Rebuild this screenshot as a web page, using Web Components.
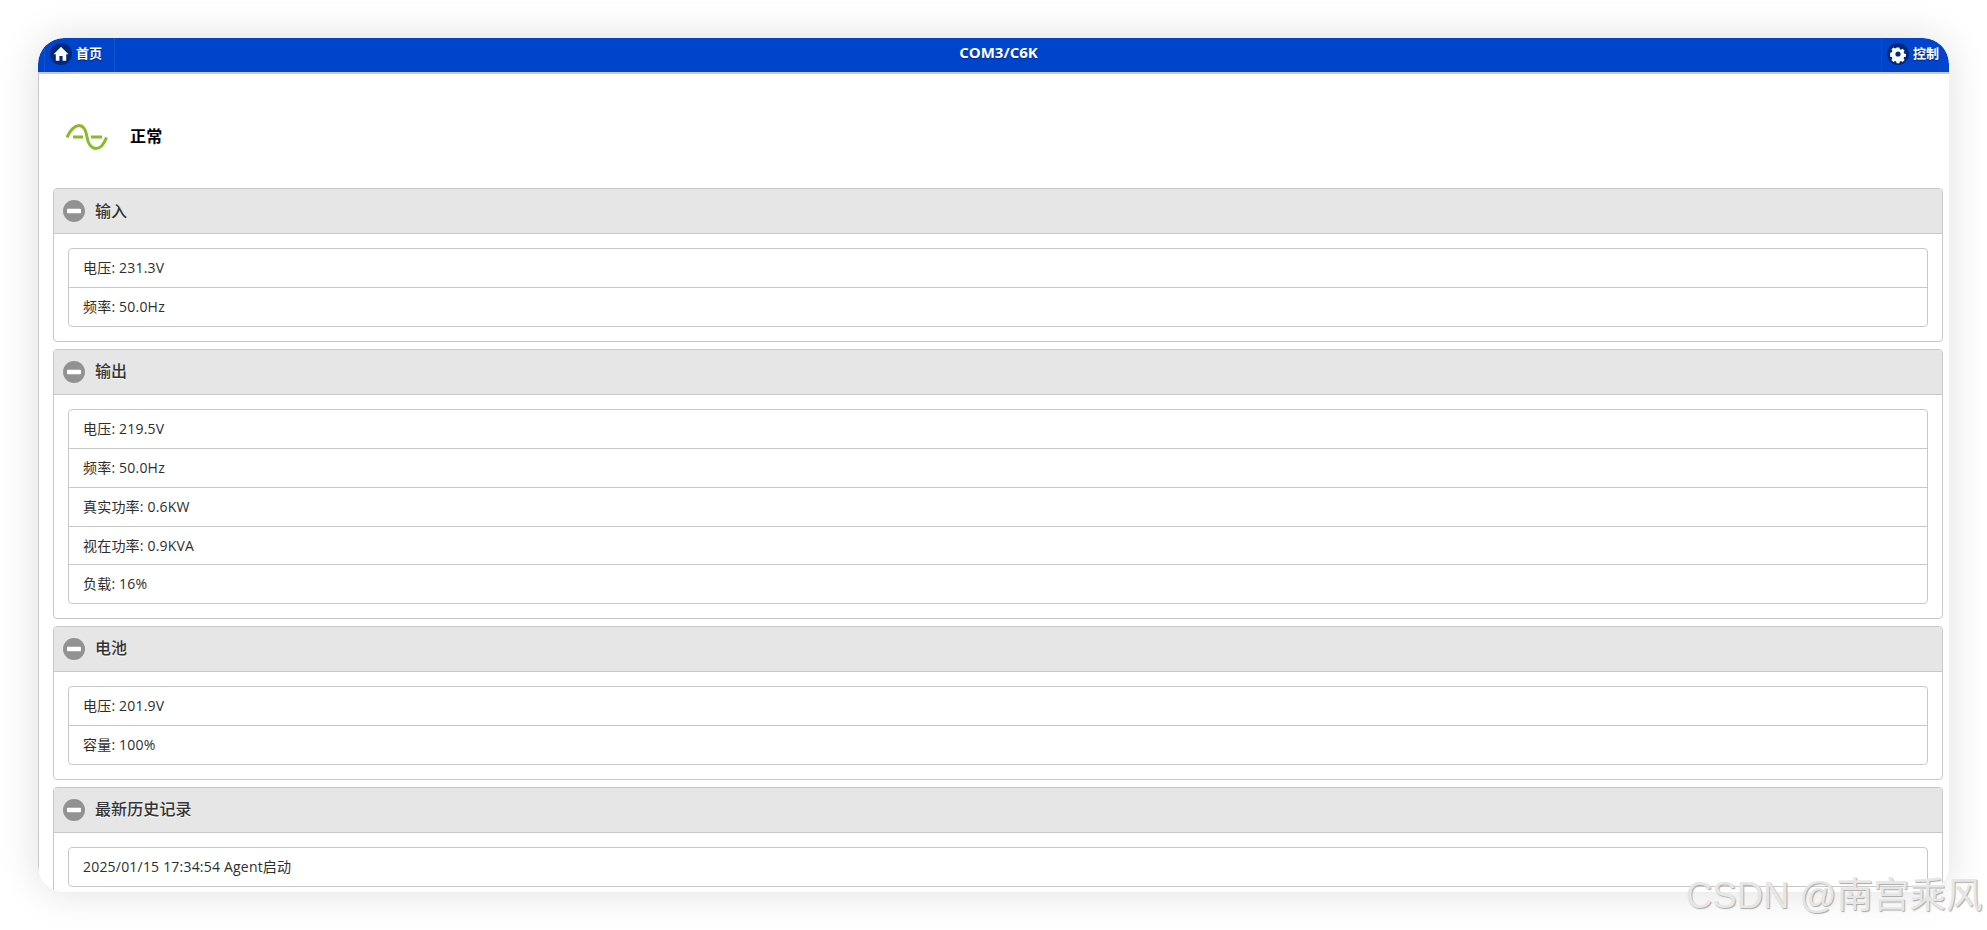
<!DOCTYPE html>
<html lang="zh"><head><meta charset="utf-8">
<style>
html,body{margin:0;height:100%;background:#fff;overflow:hidden}
body{box-sizing:border-box;padding:38px 38px 38px 38px;font-family:"Open Sans","Noto Sans CJK SC",sans-serif;position:relative}
</style></head><body>
<ups-window>
  <ups-header slot="header" title-text="COM3/C6K"></ups-header>
  <ups-status>正常</ups-status>
  <ups-panel heading="输入">
    <ups-row>电压: 231.3V</ups-row><ups-row>频率: 50.0Hz</ups-row>
  </ups-panel>
  <ups-panel heading="输出">
    <ups-row>电压: 219.5V</ups-row><ups-row>频率: 50.0Hz</ups-row><ups-row>真实功率: 0.6KW</ups-row><ups-row>视在功率: 0.9KVA</ups-row><ups-row>负载: 16%</ups-row>
  </ups-panel>
  <ups-panel heading="电池">
    <ups-row>电压: 201.9V</ups-row><ups-row>容量: 100%</ups-row>
  </ups-panel>
  <ups-panel heading="最新历史记录">
    <ups-row>2025/01/15 17:34:54 Agent启动</ups-row>
  </ups-panel>
</ups-window>
<ups-watermark>CSDN @南宫乘风</ups-watermark>
<script>
function def(name, html){
  customElements.define(name, class extends HTMLElement{
    connectedCallback(){
      if(this.shadowRoot) return;
      const r=this.attachShadow({mode:'open'});
      r.innerHTML=typeof html==='function'?html(this):html;
    }
  });
}
const FONT='"Open Sans","Noto Sans CJK SC",sans-serif';
def('ups-window',`<style>
:host{display:block;box-sizing:border-box;width:1911px;height:854px;border-radius:26px;overflow:hidden;background:#fff;box-shadow:0 0 40px rgba(0,0,0,.13);}
.wrap{height:100%;display:flex;flex-direction:column;border-radius:26px;overflow:hidden}
.body{flex:1;min-height:0;overflow:hidden;border-left:1px solid #c8c8c8;padding:0 6px 0 14px}
</style><div class="wrap"><slot name="header"></slot><div class="body"><slot></slot></div></div>`);
const home=`<svg viewBox="0 0 22 22" width="22" height="22"><circle cx="11" cy="11" r="11" fill="#00287c"/><path d="M11 3.800 L3.600 11.200 H5.800 V17.800 H9.400 V13 H12.600 V17.800 H16.200 V11.200 H18.400 Z" fill="#fff"/></svg>`;
const gear=`<svg viewBox="0 0 22 22" width="22" height="22"><circle cx="11" cy="11" r="11" fill="#00287c"/><path fill="#fff" fill-rule="evenodd" d="M9.600 4.400h2.800l.4 1.800 1.200.5 1.600-1 2 2-1 1.600.5 1.200 1.800.4v2.800l-1.800.4-.5 1.200 1 1.600-2 2-1.600-1-1.200.5-.4 1.800H9.600l-.4-1.800-1.200-.5-1.600 1-2-2 1-1.600-.5-1.200-1.800-.4V9.700l1.800-.4.500-1.200-1-1.600 2-2 1.600 1 1.200-.5zM11 8.400a2.600 2.600 0 1 0 0 5.200 2.600 2.600 0 0 0 0-5.200z"/></svg>`;
def('ups-header',h=>`<style>
:host{display:block;height:36px;box-sizing:border-box;background:#0044cc;border-bottom:2px solid #c8c8c8;color:#fff;font:700 13px ${FONT};}
.bar{height:34px;display:grid;grid-template-columns:1fr auto 1fr;padding-left:6px}
.btn{display:inline-flex;align-items:flex-start;gap:4px;height:34px;box-sizing:border-box;padding:5px 0 0 5px;text-shadow:0 1px 1px #00268a;}
.btn span{line-height:20px}
.home{width:71px;border-left:1px solid #0f55d0;border-right:1px solid #0f55d0}
.ctl{width:68px;border-left:1px solid #0a4cd6;padding-left:5px}
.l{justify-self:start}.r{justify-self:end}
.t{font-size:15px;line-height:28px;padding-left:4px;text-shadow:0 1px 1px #00268a;}
</style><div class="bar"><div class="l"><div class="btn home">${home}<span>首页</span></div></div><div class="t">${h.getAttribute('title-text')}</div><div class="r"><div class="btn ctl">${gear}<span>控制</span></div></div></div>`);
def('ups-status',`<style>
:host{display:flex;align-items:center;height:114px;box-sizing:border-box;padding:8px 0 0 13px;color:#000;font:700 16px ${FONT};}
svg{display:block;margin-right:22px;margin-top:4px}
span{letter-spacing:.3px}
</style><svg width="42" height="26" viewBox="0 0 42 26"><path d="M1 13.500C4 6 9 1.500 13 1.500c4.500 0 7 4.500 8 11.500s4.500 11.500 9 11.500c4 0 8-4.500 10.500-11" fill="none" stroke="#86bc24" stroke-width="3"/><path d="M7 13h10M25 13h11" stroke="#86bc24" stroke-width="3"/></svg><span><slot></slot></span>`);
def('ups-panel',h=>`<style>
:host{display:block;box-sizing:border-box;border:1px solid #c8c8c8;border-radius:4px;background:#fff;margin-bottom:7px;padding-bottom:14px;color:#333;font:400 14px ${FONT};}
.head{height:45px;box-sizing:border-box;background:#e6e6e6;border-bottom:1px solid #c8c8c8;border-radius:3px 3px 0 0;display:flex;align-items:center;padding-left:9px;gap:10px;font-size:16px;font-weight:500;color:#333;margin-bottom:14px;text-shadow:0 1px 0 #fff}
.head svg{display:block}
.head span{margin-top:-3px;letter-spacing:.1px}
.list{margin:0 14px;border:1px solid #c8c8c8;border-radius:4px;overflow:hidden}
</style><div class="head"><svg width="22" height="22" viewBox="0 0 22 22"><circle cx="11" cy="11" r="11" fill="#929292"/><rect x="4" y="8.800" width="14" height="4.400" rx=".8" fill="#fff"/></svg><span>${h.getAttribute('heading')}</span></div><div class="list"><slot></slot></div>`);
def('ups-row',`<style>
:host{display:block;box-sizing:border-box;height:38.600px;padding:0 14px;line-height:37px;font-size:14px;letter-spacing:.2px;color:#2e2e2e;border-top:1px solid #c8c8c8}
:host(:first-child){border-top:0;height:38.400px;line-height:38px}
</style><slot></slot>`);
def('ups-watermark',`<style>
:host{position:absolute;left:1686px;top:872px;font:400 36.500px "Liberation Sans","Noto Sans CJK SC",sans-serif;color:#e6e6e6;white-space:nowrap;text-shadow:1px 1px 1px #a8a8a8;line-height:48px}
</style><slot></slot>`);
</script>
</body></html>
